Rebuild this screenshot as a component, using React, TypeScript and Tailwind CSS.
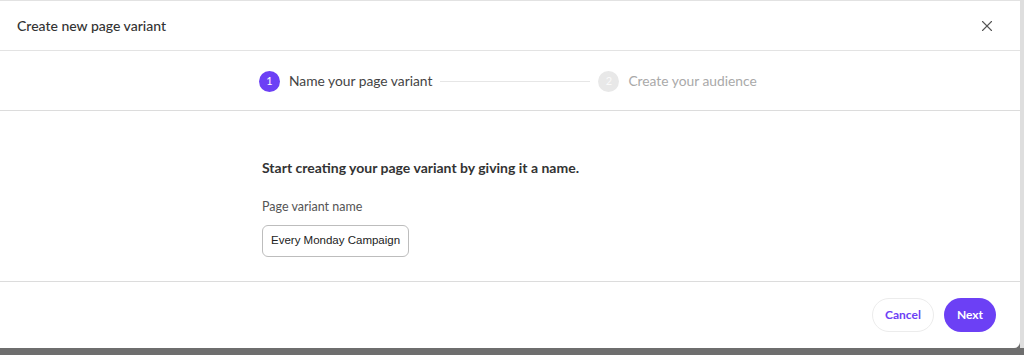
import { X } from "lucide-react";

export default function App() {
  return (
    <div className="w-[1024px] h-[355px] bg-[#6e6e6e] overflow-hidden font-['Lato',sans-serif]">
      <div className="flex h-[348px]">
        <div className="w-[1020px] h-full bg-white border-t border-[#e2e2e2] rounded-br-[6px] flex flex-col">
          {/* header */}
          <div className="h-[50px] flex items-center justify-between pl-[17px] pr-[24px] border-b border-[#e3e3e3]">
            <h1 className="text-[14px] font-medium text-[#333]">Create new page variant</h1>
            <X size={18} strokeWidth={1.5} className="text-[#555]" />
          </div>

          {/* stepper */}
          <div className="h-[60px] flex items-center pl-[259px] pt-[1px] border-b border-[#dcdcdc]">
            <div className="flex items-center gap-[9px]">
              <span className="w-[21px] h-[21px] rounded-full bg-[#6c40f5] text-white text-[11px] flex items-center justify-center">1</span>
              <span className="text-[13.8px] text-[#444]">Name your page variant</span>
            </div>
            <div className="w-[150px] h-px bg-[#e6e6e6] mx-[8px]" />
            <div className="flex items-center gap-[9px]">
              <span className="w-[21px] h-[21px] rounded-full bg-[#e8e8e8] text-[#fafafa] text-[11px] flex items-center justify-center">2</span>
              <span className="text-[13.8px] text-[#a9a9a9]">Create your audience</span>
            </div>
          </div>

          {/* body */}
          <div className="h-[171px] pl-[262px] pt-[46px] border-b border-[#dcdcdc]">
            <p className="text-[14px] font-bold text-[#333]">Start creating your page variant by giving it a name.</p>
            <label className="block mt-[20px] text-[12.5px] text-[#555]">Page variant name</label>
            <div className="mt-[8px] w-[147px] h-[32px] rounded-[6px] border border-[#bdbdbd] flex items-center pl-[8px] whitespace-nowrap text-[11.5px] text-[#222] font-['Liberation_Sans',sans-serif]">
              Every Monday Campaign
            </div>
          </div>

          {/* footer */}
          <div className="flex-1 flex items-center justify-end gap-[10px] pr-[24px]">
            <button className="h-[34px] w-[62px] rounded-full border border-[#ececec] text-[12px] font-bold text-[#6c40f5]">Cancel</button>
            <button className="h-[34px] w-[52px] rounded-full bg-[#6c40f5] text-[12px] font-bold text-white">Next</button>
          </div>
        </div>
        <div className="flex-1 bg-[#dedede]" />
      </div>
    </div>
  );
}
